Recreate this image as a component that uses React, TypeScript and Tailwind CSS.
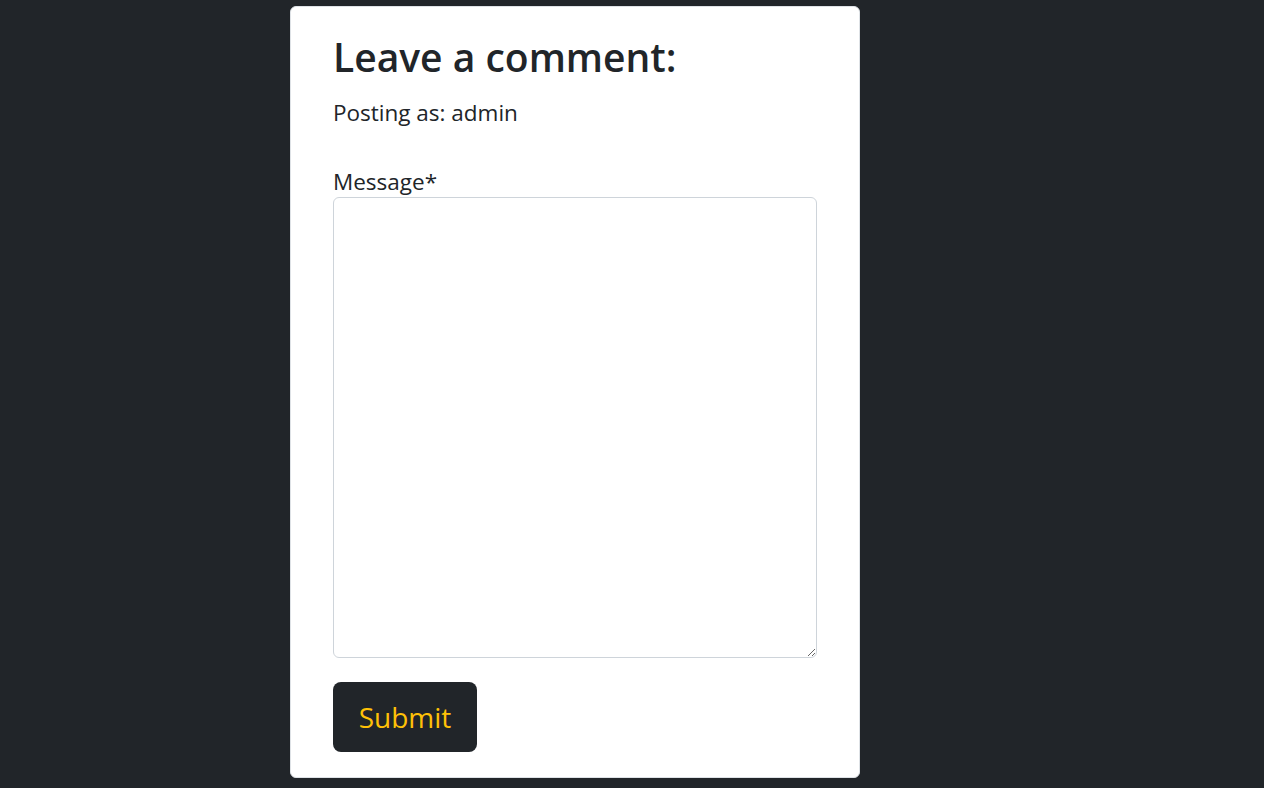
export default function App() {
  return (
    <div
      className="min-h-[788px] bg-[#212529] pt-[6px] text-[#212529]"
      style={{ fontFamily: '"Open Sans", "Noto Sans", sans-serif' }}
    >
      <div className="ml-[290px] w-[570px] rounded-md border border-[#dee2e6] bg-white px-[42px] pb-[25px] pt-[26px]">
        <h1 className="text-[39px] font-semibold leading-[48px]">Leave a comment:</h1>
        <p className="mt-[15px] text-[22.5px] leading-[34px]">Posting as: admin</p>
        <form className="mt-[36px]">
          <label className="block text-[22.5px] leading-[31px]">Message*</label>
          <textarea className="block h-[461px] w-full rounded-md border border-[#ced4da] bg-white" />
          <button
            type="button"
            className="mt-[24px] h-[70px] w-[144px] rounded-lg bg-[#212529] text-[28px] leading-[70px] text-[#ffc107]"
          >
            Submit
          </button>
        </form>
      </div>
    </div>
  );
}
